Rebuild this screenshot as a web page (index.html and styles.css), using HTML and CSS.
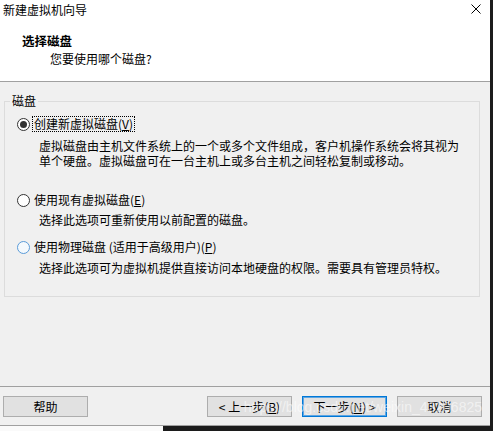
FILE: index.html
```html
<!DOCTYPE html>
<html>
<head>
    <link rel="stylesheet" href="styles.css">
</head>
<body>
    <div class="window">
        <div class="header">
            <div class="titlebar">
                <span class="title">新建虚拟机向导</span>
                <svg class="close" width="10" height="10" viewBox="0 0 10 10">
                    <path d="M0.5 0.5 L9.5 9.5 M9.5 0.5 L0.5 9.5" stroke="#000" stroke-width="1" fill="none"/>
                </svg>
            </div>
            <div class="heading">选择磁盘</div>
            <div class="subtitle">您要使用哪个磁盘?</div>
        </div>

        <div class="content">
            <fieldset class="group">
                <legend>磁盘</legend>

                <div class="option first">
                    <span class="radio checked"></span>
                    <span class="label focused">创建新虚拟磁盘(<u>V</u>)</span>
                </div>
                <div class="desc desc-create">虚拟磁盘由主机文件系统上的一个或多个文件组成，客户机操作系统会将其视为<br>单个硬盘。虚拟磁盘可在一台主机上或多台主机之间轻松复制或移动。</div>

                <div class="option existing">
                    <span class="radio"></span>
                    <span class="label">使用现有虚拟磁盘(<u>E</u>)</span>
                </div>
                <div class="desc desc-existing">选择此选项可重新使用以前配置的磁盘。</div>

                <div class="option physical">
                    <span class="radio hover"></span>
                    <span class="label">使用物理磁盘 (适用于高级用户)(<u>P</u>)</span>
                </div>
                <div class="desc desc-physical">选择此选项可为虚拟机提供直接访问本地硬盘的权限。需要具有管理员特权。</div>
            </fieldset>
        </div>

        <div class="footer">
            <button class="btn">帮助</button>
            <div class="nav">
                <button class="btn">&lt; 上一步(<u>B</u>)</button>
                <button class="btn default">下一步(<u>N</u>) &gt;</button>
                <button class="btn">取消</button>
            </div>
            <span class="watermark">https://blog.csdn.net/weixin_43206825</span>
        </div>
    </div>
    <div class="edge"><div class="edge-light"></div></div>
</body>
</html>
```

FILE: styles.css
```css
body {
    margin: 0;
    width: 493px;
    height: 431px;
    background-color: #1c1c1c;
    font-family: "Noto Sans CJK SC", "Liberation Sans", sans-serif;
    font-size: 12px;
    color: #000;
    overflow: hidden;
}
.window {
    position: relative;
    width: 490px;
    height: 426px;
    box-sizing: border-box;
    background-color: #f0f0f0;
    border-bottom: 1px solid #a0a0a0;
    display: flex;
    flex-direction: column;
}
.header {
    background-color: #fff;
    height: 82px;
    box-sizing: border-box;
    border-bottom: 1px solid #a0a0a0;
}
.titlebar {
    height: 20px;
    display: flex;
    justify-content: space-between;
    align-items: center;
    padding: 0 9px 0 3px;
    line-height: 14px;
}
.close {
    margin-top: -2px;
}
.heading {
    margin: 14px 0 0 22px;
    line-height: 14px;
    font-weight: bold;
    font-size: 12.5px;
}
.subtitle {
    margin: 4px 0 0 50px;
    line-height: 14px;
}
.content {
    padding: 0;
}
.group {
    margin: 12px 0 0 4px;
    width: 476px;
    box-sizing: border-box;
    padding: 0 0 21px 0;
    border: 1px solid #dcdcdc;
    min-width: 0;
}
.group legend {
    margin-left: 5px;
    padding: 0 2px;
    line-height: 14px;
}
.option {
    display: flex;
    align-items: center;
    height: 16px;
    padding-left: 12px;
    line-height: 16px;
}
.option.first {
    margin-top: 8px;
}
.option.existing {
    margin-top: 24px;
}
.option.physical {
    margin-top: 12px;
}
.radio {
    width: 13px;
    height: 13px;
    box-sizing: border-box;
    border: 1px solid #333;
    border-radius: 50%;
    background-color: #fff;
    display: flex;
    align-items: center;
    justify-content: center;
    margin-right: 3px;
}
.radio.checked::after {
    content: "";
    width: 7px;
    height: 7px;
    border-radius: 50%;
    background-color: #333;
}
.radio.hover {
    border-color: #5a9bd8;
    background-color: #f4f9fd;
}
.label {
    padding: 0 1px;
    line-height: 14px;
}
.label.focused {
    outline: 1px dotted #000;
    outline-offset: 0;
}
.desc {
    margin-left: 34px;
    line-height: 15px;
}
.desc-create {
    margin-top: 6px;
}
.desc-existing {
    margin-top: 4px;
}
.desc-physical {
    margin-top: 5px;
}
.footer {
    position: relative;
    margin-top: auto;
    border-top: 1px solid #a0a0a0;
    padding: 9px 8px 8px 3px;
    display: flex;
}
.nav {
    margin-left: auto;
    display: flex;
    gap: 10px;
}
.btn {
    width: 85px;
    height: 21px;
    box-sizing: border-box;
    padding: 0;
    background-color: #e1e1e1;
    border: 1px solid #adadad;
    font-family: "Noto Sans CJK SC", "Liberation Sans", sans-serif;
    font-size: 12px;
    line-height: 14px;
    color: #000;
}
.btn.default {
    border-color: #0078d7;
    box-shadow: inset 0 0 0 1px #5ea6e3;
}
.watermark {
    position: absolute;
    right: 8px;
    top: 12px;
    font-family: "Liberation Sans", sans-serif;
    font-size: 14px;
    line-height: 16px;
    color: rgba(255, 255, 255, 0.55);
    pointer-events: none;
}
.edge {
    height: 5px;
    width: 490px;
}
.edge-light {
    width: 163px;
    height: 5px;
    background-color: #fafafa;
}
```
